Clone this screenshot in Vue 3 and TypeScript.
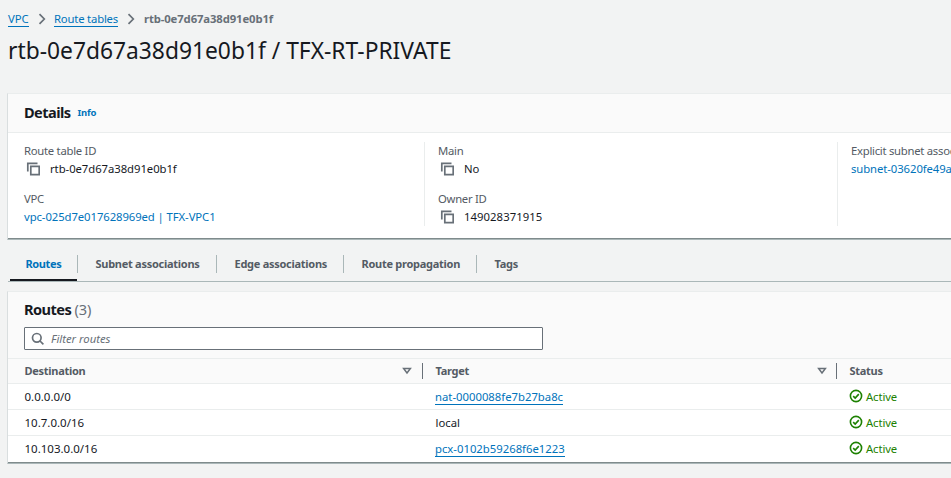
<script setup lang="ts">
import { ref } from 'vue'

interface Route {
  destination: string
  target: string
  linked: boolean
  status: string
}

const tableId = 'rtb-0e7d67a38d91e0b1f'
const tabs = ['Routes', 'Subnet associations', 'Edge associations', 'Route propagation', 'Tags']
const active = ref('Routes')
const filter = ref('')
const routes: Route[] = [
  { destination: '0.0.0.0/0', target: 'nat-0000088fe7b27ba8c', linked: true, status: 'Active' },
  { destination: '10.7.0.0/16', target: 'local', linked: false, status: 'Active' },
  { destination: '10.103.0.0/16', target: 'pcx-0102b59268f6e1223', linked: true, status: 'Active' },
]
</script>

<template>
  <div class="page">
    <nav class="crumbs">
      <a class="link u vpc">VPC</a>
      <svg class="chev" viewBox="0 0 8 12"><path d="M1.5 1.2 6.3 6 1.5 10.8" /></svg>
      <a class="link u rt">Route tables</a>
      <svg class="chev" viewBox="0 0 8 12"><path d="M1.5 1.2 6.3 6 1.5 10.8" /></svg>
      <span class="current">{{ tableId }}</span>
    </nav>
    <h1>{{ tableId }} / TFX-RT-PRIVATE</h1>

    <section class="card details">
      <header class="head"><h2>Details</h2><a class="info">Info</a></header>
      <div class="fields">
        <div class="col">
          <div class="label">Route table ID</div>
          <div class="value">
            <svg class="copy" viewBox="0 0 14 14"><path d="M1.8 9.5V1.3h9.7" /><path d="M4.8 4.3h8.4v8.4H4.8z" /></svg>
            <span class="id">{{ tableId }}</span>
          </div>
          <div class="label second">VPC</div>
          <div class="value"><a class="link vpclink">vpc-025d7e017628969ed | TFX-VPC1</a></div>
        </div>
        <div class="col">
          <div class="label">Main</div>
          <div class="value">
            <svg class="copy" viewBox="0 0 14 14"><path d="M1.8 9.5V1.3h9.7" /><path d="M4.8 4.3h8.4v8.4H4.8z" /></svg>
            <span>No</span>
          </div>
          <div class="label second">Owner ID</div>
          <div class="value">
            <svg class="copy" viewBox="0 0 14 14"><path d="M1.8 9.5V1.3h9.7" /><path d="M4.8 4.3h8.4v8.4H4.8z" /></svg>
            <span class="number">149028371915</span>
          </div>
        </div>
        <div class="col">
          <div class="label">Explicit subnet associations</div>
          <div class="value"><a class="link vpclink">subnet-03620fe49a</a></div>
        </div>
      </div>
    </section>

    <div class="tabs">
      <button v-for="t in tabs" :key="t" :class="['tab', { on: t === active }]" @click="active = t">
        <span>{{ t }}</span>
      </button>
    </div>

    <section class="card routes">
      <header class="top">
        <h2>Routes <span class="count">({{ routes.length }})</span></h2>
        <label class="search">
          <svg viewBox="0 0 14 14"><circle cx="5.8" cy="5.8" r="4.3" /><path d="m9 9 3.4 3.4" /></svg>
          <input v-model="filter" placeholder="Filter routes" />
        </label>
      </header>
      <div class="row th">
        <div class="cell">
          <span>Destination</span>
          <svg class="sort" viewBox="0 0 10 8"><path d="M1.6 1.4h6.8L5 6z" /></svg>
        </div>
        <div class="cell">
          <span>Target</span>
          <svg class="sort" viewBox="0 0 10 8"><path d="M1.6 1.4h6.8L5 6z" /></svg>
        </div>
        <div class="cell"><span>Status</span></div>
      </div>
      <div v-for="r in routes" :key="r.destination" class="row">
        <div class="cell ip">{{ r.destination }}</div>
        <div class="cell"><a v-if="r.linked" class="link u target">{{ r.target }}</a><span v-else>{{ r.target }}</span></div>
        <div class="cell ok">
          <svg viewBox="0 0 14 14"><circle cx="7" cy="7" r="5.6" /><path d="M4.2 7.1 6.2 9.1 9.8 5.1" /></svg>
          {{ r.status }}
        </div>
      </div>
    </section>
  </div>
</template>

<style>
body {
  background: #f2f3f3;
}
</style>

<style scoped>
.page {
  box-sizing: border-box;
  width: 100%;
  height: 478px;
  padding-left: 7px;
  overflow: hidden;
  background: #f2f3f3;
  color: #16191f;
  font: 11.3px/18px "Noto Sans", "Open Sans", sans-serif;
}
svg {
  fill: none;
  stroke: #687078;
  flex: none;
}
h1,
h2 {
  margin: 0;
}
.link {
  color: #0073bb;
}
.u {
  border-bottom: 1px solid #0073bb;
  line-height: 14px;
}
.crumbs {
  display: flex;
  align-items: center;
  height: 16px;
  padding: 11px 0 0 1px;
}
.vpc {
  width: 21px;
}
.rt {
  width: 64px;
  letter-spacing: -0.19px;
  white-space: nowrap;
}
.chev {
  width: 8px;
  height: 12px;
  margin: 0 8px 1px 9px;
  stroke-width: 1.7;
}
.current {
  margin-left: 1px;
  color: #687078;
  font-weight: 700;
  letter-spacing: -0.11px;
}
h1 {
  height: 66px;
  padding-left: 1px;
  font-size: 22.8px;
  font-weight: 400;
  line-height: 48px;
}
.card {
  box-sizing: border-box;
  background: #fff;
  border-top: 1px solid #eaeded;
  border-left: 1px solid #d9dedf;
  border-bottom: 1px solid #aab7b8;
  box-shadow: inset 0 -1px #7f8b8c;
}
.details {
  height: 147px;
}
.head {
  display: flex;
  align-items: flex-start;
  box-sizing: border-box;
  height: 39px;
  padding: 8px 0 0 16px;
  background: #fafafa;
  border-bottom: 1px solid #eaeded;
}
h2 {
  font-size: 14.6px;
  font-weight: 700;
  line-height: 20px;
  letter-spacing: -0.56px;
}
.info {
  margin: 3px 0 0 7px;
  color: #0073bb;
  font-size: 9.5px;
  font-weight: 700;
  line-height: 16px;
  letter-spacing: -0.2px;
}
.fields {
  display: grid;
  grid-template-columns: 416px 413px 1fr;
  padding-top: 9px;
}
.col {
  box-sizing: border-box;
  height: 84px;
  padding-left: 13px;
  border-left: 1px solid #eaeded;
  white-space: nowrap;
}
.col:first-child {
  padding-left: 16px;
  border-left: 0;
}
.label {
  color: #545b64;
  letter-spacing: -0.27px;
}
.second {
  margin-top: 12px;
}
.value {
  display: flex;
  align-items: center;
  height: 18px;
}
.copy {
  width: 14px;
  height: 14px;
  margin: 0 10px 1px 2px;
  stroke-width: 1.7;
}
.id {
  letter-spacing: -0.05px;
}
.number {
  letter-spacing: 0.06px;
}
.vpclink {
  letter-spacing: -0.08px;
}
.tabs {
  display: grid;
  grid-template-columns: 68px 139px 127px 133px 1fr;
  box-sizing: border-box;
  height: 33px;
  margin: 9px 0 9px 1px;
  padding-left: 2px;
  border-bottom: 1px solid #aab7b8;
}
.tab {
  display: flex;
  padding: 0 0 0 17.5px;
  border: 0;
  background: none;
  color: #545b64;
  font: 700 11px/18px "Noto Sans", "Open Sans", sans-serif;
  letter-spacing: -0.27px;
  text-align: left;
  white-space: nowrap;
}
.tab span {
  flex: 1;
  height: 18px;
  margin-top: 6px;
  border-right: 1px solid #aab7b8;
}
.tab:last-child span {
  border-right: 0;
}
.on {
  padding-left: 15.5px;
  background: linear-gradient(#16191f, #16191f) left bottom / 67px 2px no-repeat;
  color: #0073bb;
  letter-spacing: -0.38px;
}
.routes {
  height: 173px;
}
.top {
  box-sizing: border-box;
  height: 67px;
  padding: 7px 0 0 16px;
  background: #fafafa;
  border-bottom: 1px solid #eaeded;
}
.count {
  color: #687078;
  font-weight: 400;
  letter-spacing: -0.1px;
}
.search {
  display: flex;
  align-items: center;
  box-sizing: border-box;
  width: 519px;
  height: 23px;
  margin-top: 8px;
  padding-left: 6px;
  background: #fff;
  border: 1px solid #687078;
  border-radius: 1px;
}
.search svg {
  width: 14px;
  height: 14px;
  stroke-width: 1.7;
}
.search input {
  flex: 1;
  min-width: 0;
  height: 20px;
  padding: 0 0 0 6px;
  border: 0;
  outline: 0;
  background: none;
  font: inherit;
}
.search input::placeholder {
  color: #687078;
  font-style: italic;
  opacity: 1;
}
.row {
  display: grid;
  grid-template-columns: 415px 414px 1fr;
  box-sizing: border-box;
  height: 26px;
  border-bottom: 1px solid #eaeded;
}
.row:last-child {
  border-bottom: 0;
  padding-bottom: 1px;
}
.cell {
  display: flex;
  align-items: center;
  padding-left: 12.5px;
}
.cell:first-child {
  padding-left: 16.5px;
}
.target {
  margin: 1px 0 0 -0.5px;
  line-height: 15px;
}
.th {
  height: 25px;
  background: #fafafa;
  color: #545b64;
  font-size: 11px;
  font-weight: 700;
  letter-spacing: -0.28px;
}
.th .cell {
  justify-content: space-between;
  height: 16px;
  margin-top: 4px;
  padding-right: 10.5px;
  border-right: 1px solid #687078;
}
.th .cell:nth-child(2) {
  padding-right: 9.5px;
}
.th .cell:last-child {
  border-right: 0;
}
.sort {
  width: 10px;
  height: 8px;
  stroke-width: 1.5;
}
.ip {
  font-size: 11.5px;
}
.ok {
  gap: 3px;
  padding-left: 12px;
  color: #1d8102;
  letter-spacing: -0.1px;
}
.ok svg {
  width: 14px;
  height: 14px;
  margin-bottom: 1px;
  stroke: #1d8102;
  stroke-width: 1.6;
}
</style>
